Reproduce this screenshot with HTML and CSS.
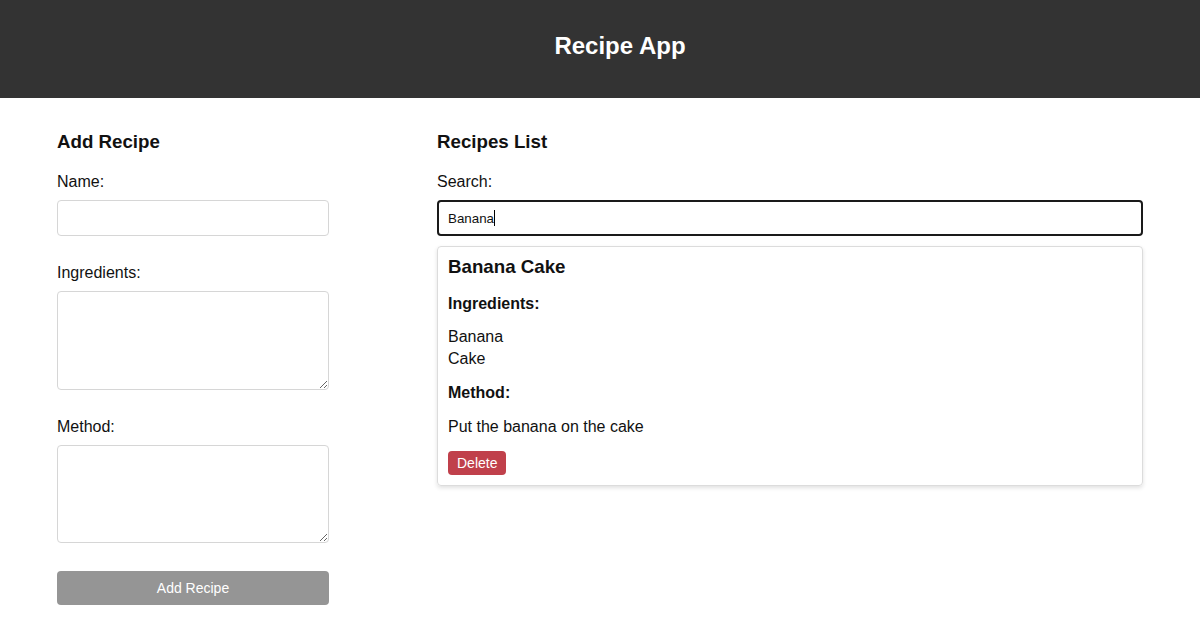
FILE: index.html
```html
<!DOCTYPE html>
<html lang="en">
<head>
<meta charset="utf-8">
<title>Recipe App</title>
<link rel="stylesheet" href="styles.css">
</head>
<body>
<header class="app-header">
  <h1 class="app-title">Recipe App</h1>
</header>
<main class="main">
  <section class="add-form">
    <h3 class="section-title">Add Recipe</h3>
    <label class="field-label" for="name">Name:</label>
    <input class="field-input" id="name" type="text">
    <label class="field-label" for="ingredients">Ingredients:</label>
    <textarea class="field-area" id="ingredients"></textarea>
    <label class="field-label" for="method">Method:</label>
    <textarea class="field-area field-area-last" id="method"></textarea>
    <button class="add-btn" type="button">Add Recipe</button>
  </section>
  <section class="recipes">
    <h3 class="section-title">Recipes List</h3>
    <label class="field-label" for="search">Search:</label>
    <div class="search-input" id="search"><span class="search-text">Banana</span><span class="caret"></span></div>
    <div class="card">
      <h3 class="card-title">Banana Cake</h3>
      <h4 class="card-sub card-sub-ingredients">Ingredients:</h4>
      <ul class="ingredient-list">
        <li>Banana</li>
        <li>Cake</li>
      </ul>
      <h4 class="card-sub card-sub-method">Method:</h4>
      <p class="card-text">Put the banana on the cake</p>
      <button class="delete-btn" type="button">Delete</button>
    </div>
  </section>
</main>
</body>
</html>
```
FILE: styles.css
```css
* { box-sizing: border-box; }
body {
  margin: 0;
  font-family: "Liberation Sans", Arial, sans-serif;
  color: #111;
  background: #fff;
}
.app-header {
  background: #333333;
  height: 98px;
  display: flex;
  align-items: center;
  justify-content: center;
  padding: 0 0 6px 40px;
}
.app-title {
  margin: 0;
  color: #fff;
  font-size: 24px;
  font-weight: bold;
}
.main {
  display: flex;
  gap: 108px;
  padding: 33px 57px 0 57px;
}
.add-form {
  width: 272px;
  display: flex;
  flex-direction: column;
}
.recipes {
  flex: 1;
  display: flex;
  flex-direction: column;
}
.section-title {
  margin: 0 0 20px 0;
  font-size: 18.72px;
  font-weight: bold;
}
.field-label {
  display: block;
  font-size: 16px;
  margin-bottom: 9px;
}
.field-input {
  height: 36px;
  border: 1px solid #d6d6d6;
  border-radius: 4px;
  margin: 0 0 28px 0;
  font-family: inherit;
  width: 100%;
}
.field-area {
  height: 99px;
  flex: none;
  border: 1px solid #d6d6d6;
  border-radius: 4px;
  margin: 0 0 28px 0;
  width: 100%;
  font-family: inherit;
  resize: vertical;
  display: block;
}
.field-area-last {
  height: 98px;
}
.add-btn {
  height: 34px;
  border: 0;
  border-radius: 4px;
  background: #959595;
  color: #fff;
  font-family: inherit;
  font-size: 14px;
  width: 100%;
}
.search-input {
  height: 36px;
  border: 2px solid #1a1a1a;
  border-radius: 4px;
  padding: 0 0 0 9px;
  display: flex;
  align-items: center;
  font-size: 13.33px;
  margin-bottom: 10px;
}
.caret {
  display: inline-block;
  width: 1px;
  height: 16px;
  background: #000;
}
.card {
  border: 1px solid #dcdcdc;
  border-radius: 4px;
  box-shadow: 0 2px 4px rgba(0,0,0,0.12);
  padding: 9px 10px 10px 10px;
}
.card-title {
  margin: 0 0 17px 0;
  font-size: 18.72px;
  font-weight: bold;
}
.card-sub {
  margin: 0;
  font-size: 16px;
  font-weight: bold;
}
.card-sub-ingredients { margin-bottom: 13px; }
.card-sub-method { margin-bottom: 16px; }
.ingredient-list {
  list-style: none;
  margin: 0 0 14px 0;
  padding: 0;
  font-size: 16px;
  line-height: 22px;
}
.card-text {
  margin: 0 0 15px 0;
  font-size: 16px;
}
.delete-btn {
  border: 0;
  border-radius: 4px;
  background: #c0404b;
  color: #fff;
  font-family: inherit;
  font-size: 14px;
  padding: 4px 9px;
  line-height: 16px;
}
```
